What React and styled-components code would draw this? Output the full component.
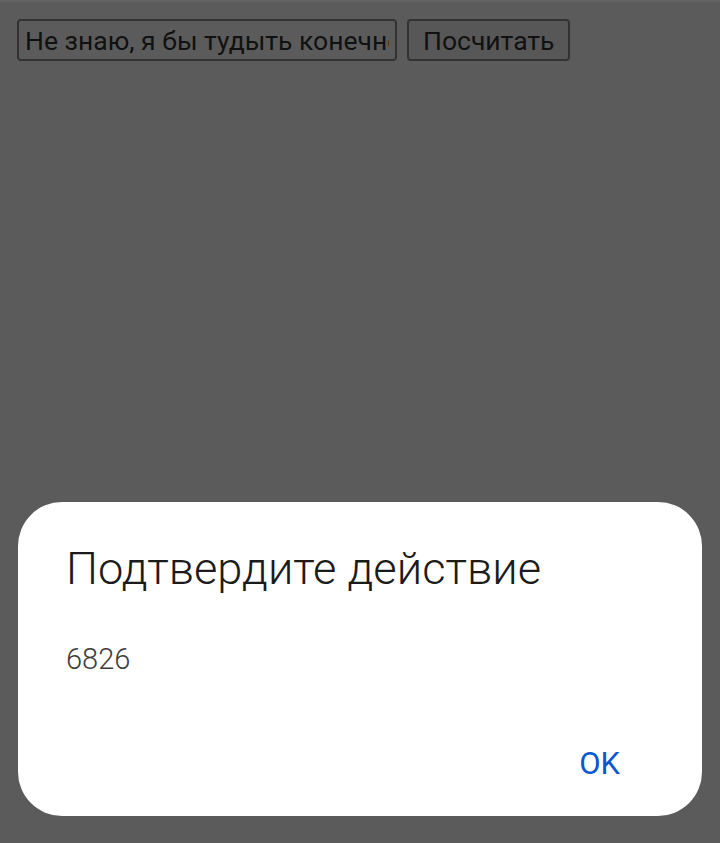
import React from "react";
import styled, { createGlobalStyle } from "styled-components";

const Global = createGlobalStyle`
  html, body { margin: 0; padding: 0; background: #5b5b5b; }
  body { font-family: Roboto, "Noto Sans", sans-serif; }
`;

const Page = styled.div`
  min-height: 843px;
  box-sizing: border-box;
  border-top: 2px solid #626262;
  padding: 17px 17px;
`;

const Row = styled.div`
  display: flex;
  align-items: center;
  gap: 10px;
`;

const Field = styled.input`
  box-sizing: border-box;
  width: 380px;
  height: 42px;
  padding: 0 6px;
  border: 2px solid #333;
  border-radius: 4px;
  background: #5b5b5b;
  color: #111;
  font-family: Roboto, sans-serif;
  font-size: 26.5px;
  outline: none;
`;

const Button = styled.button`
  box-sizing: border-box;
  height: 42px;
  padding: 0 14px;
  border: 2px solid #333;
  border-radius: 4px;
  background: #575757;
  color: #111;
  font-family: Roboto, sans-serif;
  font-size: 26.5px;
`;

const Overlay = styled.div`
  position: fixed;
  inset: 0;
  display: flex;
  align-items: flex-end;
  justify-content: center;
  padding: 0 18px 27px;
`;

const Dialog = styled.div`
  box-sizing: border-box;
  width: 684px;
  height: 314px;
  background: #fff;
  border-radius: 44px;
  padding: 41px 48px 32px 48px;
  display: flex;
  flex-direction: column;
`;

const Title = styled.h2`
  margin: 0;
  font-family: Roboto, sans-serif;
  font-weight: 300;
  font-size: 45.2px;
  line-height: 52px;
  color: #1b1b1b;
`;

const Message = styled.p`
  margin: 46px 0 0;
  font-family: Roboto, sans-serif;
  font-weight: 300;
  font-size: 29px;
  line-height: 36px;
  color: #3c3c3c;
`;

const Actions = styled.div`
  margin-top: auto;
  display: flex;
  justify-content: flex-end;
`;

const ActionButton = styled.button`
  border: none;
  background: none;
  padding: 0 34px 0 0;
  font-family: Roboto, sans-serif;
  font-size: 31px;
  line-height: 40px;
  font-weight: 400;
  color: #0b57d0;
`;

export default function App() {
  return (
    <>
      <Global />
      <Page>
        <Row>
          <Field defaultValue="Не знаю, я бы тудыть конечно" />
          <Button>Посчитать</Button>
        </Row>
      </Page>
      <Overlay>
        <Dialog>
          <Title>Подтвердите действие</Title>
          <Message>6826</Message>
          <Actions>
            <ActionButton>OK</ActionButton>
          </Actions>
        </Dialog>
      </Overlay>
    </>
  );
}
